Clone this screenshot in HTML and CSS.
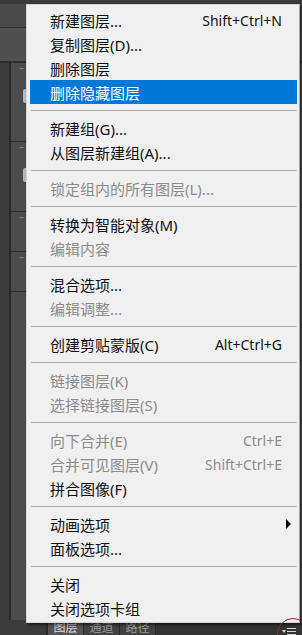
FILE: index.html
```html
<!DOCTYPE html>
<html lang="zh-CN">
<head>
    <meta charset="UTF-8" />
    <meta name="viewport" content="width=device-width, initial-scale=1.0"/>
    <title>图层菜单</title>
    <link rel="stylesheet" href="styles.css">
</head>
<body>

<div class="workspace">
    <div class="top-bar">
        <span class="top-tab"></span>
        <span class="top-tab"></span>
        <span class="top-tab"></span>
    </div>
    <div class="option-bar"></div>

    <div class="dock">
        <div class="dock-edge"></div>
        <div class="dock-icons">
            <div class="dock-group tall"><span class="grip">&middot;&middot;&middot;</span><span class="dock-icon"></span></div>
            <div class="dock-group mid"><span class="grip">&middot;&middot;&middot;</span><span class="dock-icon"></span></div>
            <div class="dock-group short"><span class="grip">&middot;&middot;&middot;</span></div>
            <div class="dock-group short"><span class="grip">&middot;&middot;&middot;</span></div>
            <div class="dock-group rest"></div>
        </div>
        <div class="panel-area"></div>
    </div>

    <div class="tab-bar">
        <span class="tab-spacer"></span>
        <span class="tab active">图层</span>
        <span class="tab">通道</span>
        <span class="tab">路径</span>
        <span class="tab-fill"></span>
        <span class="panel-menu-btn">
            <svg width="14" height="8" viewBox="0 0 14 8">
                <path d="M0 2 L4 2 L2 5 Z" fill="#d8d8d8"/>
                <rect x="5" y="0" width="9" height="1" fill="#d8d8d8"/>
                <rect x="5" y="3" width="9" height="1" fill="#d8d8d8"/>
                <rect x="5" y="6" width="9" height="1" fill="#d8d8d8"/>
            </svg>
        </span>
    </div>

    <div class="context-menu">
        <div class="menu-item"><span>新建图层...</span><span class="shortcut">Shift+Ctrl+N</span></div>
        <div class="menu-item"><span>复制图层(D)...</span></div>
        <div class="menu-item"><span>删除图层</span></div>
        <div class="menu-item selected"><span>删除隐藏图层</span></div>
        <div class="menu-sep"></div>
        <div class="menu-item"><span>新建组(G)...</span></div>
        <div class="menu-item"><span>从图层新建组(A)...</span></div>
        <div class="menu-sep"></div>
        <div class="menu-item disabled"><span>锁定组内的所有图层(L)...</span></div>
        <div class="menu-sep"></div>
        <div class="menu-item"><span>转换为智能对象(M)</span></div>
        <div class="menu-item disabled"><span>编辑内容</span></div>
        <div class="menu-sep"></div>
        <div class="menu-item"><span>混合选项...</span></div>
        <div class="menu-item disabled"><span>编辑调整...</span></div>
        <div class="menu-sep"></div>
        <div class="menu-item"><span>创建剪贴蒙版(C)</span><span class="shortcut">Alt+Ctrl+G</span></div>
        <div class="menu-sep"></div>
        <div class="menu-item disabled"><span>链接图层(K)</span></div>
        <div class="menu-item disabled"><span>选择链接图层(S)</span></div>
        <div class="menu-sep"></div>
        <div class="menu-item disabled"><span>向下合并(E)</span><span class="shortcut">Ctrl+E</span></div>
        <div class="menu-item disabled"><span>合并可见图层(V)</span><span class="shortcut">Shift+Ctrl+E</span></div>
        <div class="menu-item"><span>拼合图像(F)</span></div>
        <div class="menu-sep"></div>
        <div class="menu-item"><span>动画选项</span><span class="submenu-arrow"></span></div>
        <div class="menu-item"><span>面板选项...</span></div>
        <div class="menu-sep"></div>
        <div class="menu-item"><span>关闭</span></div>
        <div class="menu-item"><span>关闭选项卡组</span></div>
    </div>

    <span class="red-mark"></span>
</div>

</body>
</html>
```

FILE: styles.css
```css
* {
    box-sizing: border-box;
}

body {
    margin: 0;
    padding: 0;
    background-color: #535353;
    font-family: "Noto Sans", "Noto Sans CJK SC", sans-serif;
}

.workspace {
    position: relative;
    width: 302px;
    height: 635px;
    overflow: hidden;
    display: flex;
    flex-direction: column;
    background-color: #535353;
}

/* top chrome */
.top-bar {
    height: 28px;
    background-color: #4a4a4a;
    border-top: 4px solid #3a3a3a;
    border-bottom: 1px solid #333333;
    display: flex;
    padding-left: 196px;
}

.top-tab {
    width: 28px;
    height: 0;
    border-left: 1px solid #2c2c2c;
}

.option-bar {
    height: 35px;
    background-color: #505050;
    border-bottom: 2px solid #2e2e2e;
}

/* left dock */
.dock {
    flex: 1;
    display: flex;
}

.dock-edge {
    width: 11px;
    background-color: #3c3c3c;
    border-right: 2px solid #2a2a2a;
}

.dock-icons {
    width: 16px;
    display: flex;
    flex-direction: column;
    background-color: #4c4c4c;
}

.dock-group {
    border-bottom: 1px solid #2f2f2f;
    display: flex;
    flex-direction: column;
    align-items: flex-end;
    padding-top: 2px;
}

.dock-group.tall { height: 79px; }
.dock-group.mid { height: 70px; }
.dock-group.short { height: 40px; }
.dock-group.rest { flex: 1; border-bottom: none; }

.grip {
    font-size: 8px;
    line-height: 8px;
    color: #9a9a9a;
    letter-spacing: -1px;
    padding-right: 4px;
}

.dock-icon {
    margin-top: 16px;
    width: 4px;
    height: 14px;
    background-color: #b8b8b8;
    border-radius: 2px 0 0 2px;
}

.panel-area {
    flex: 1;
    background-color: #535353;
}

/* bottom tab bar */
.tab-bar {
    height: 15px;
    display: flex;
    background-color: #353535;
    font-size: 12px;
    line-height: 15px;
}

.tab-spacer {
    width: 48px;
    background-color: #3c3c3c;
    border-right: 2px solid #2a2a2a;
}

.tab {
    width: 36px;
    text-align: center;
    color: #9c9c9c;
    background-color: #424242;
    border-right: 1px solid #2b2b2b;
}

.tab.active {
    color: #dcdcdc;
    background-color: #555555;
}

.tab-fill {
    flex: 1;
}

.panel-menu-btn {
    width: 20px;
    padding-top: 4px;
}

/* annotation circle over the panel menu button */
.red-mark {
    position: absolute;
    left: 277px;
    top: 618px;
    width: 32px;
    height: 32px;
    border: 1px solid #a52020;
    border-radius: 50%;
}

/* popup menu */
.context-menu {
    position: absolute;
    left: 26px;
    top: 4px;
    width: 274px;
    padding: 3px 2px 2px 3px;
    background-color: #f0f0f0;
    border: 1px solid #d6d6d6;
    border-right-color: #a6a6a6;
    box-shadow: 2px 2px 3px rgba(0, 0, 0, 0.55);
    font-size: 15px;
    color: #111111;
}

.menu-item {
    height: 24px;
    display: flex;
    align-items: center;
    justify-content: space-between;
    padding-left: 20px;
    padding-right: 15px;
    white-space: nowrap;
}

.menu-item.selected {
    background-color: #0078d7;
    color: #ffffff;
}

.menu-item.disabled {
    color: #8c8c8c;
}

.shortcut {
    font-size: 14px;
}

.submenu-arrow {
    width: 0;
    height: 0;
    margin-right: -9px;
    border-top: 5px solid transparent;
    border-bottom: 5px solid transparent;
    border-left: 5px solid #000000;
}

.menu-sep {
    height: 12px;
    display: flex;
    align-items: center;
    padding-left: 1px;
}

.menu-sep::after {
    content: "";
    flex: 1;
    border-top: 1px solid #a8a8a8;
}
```
